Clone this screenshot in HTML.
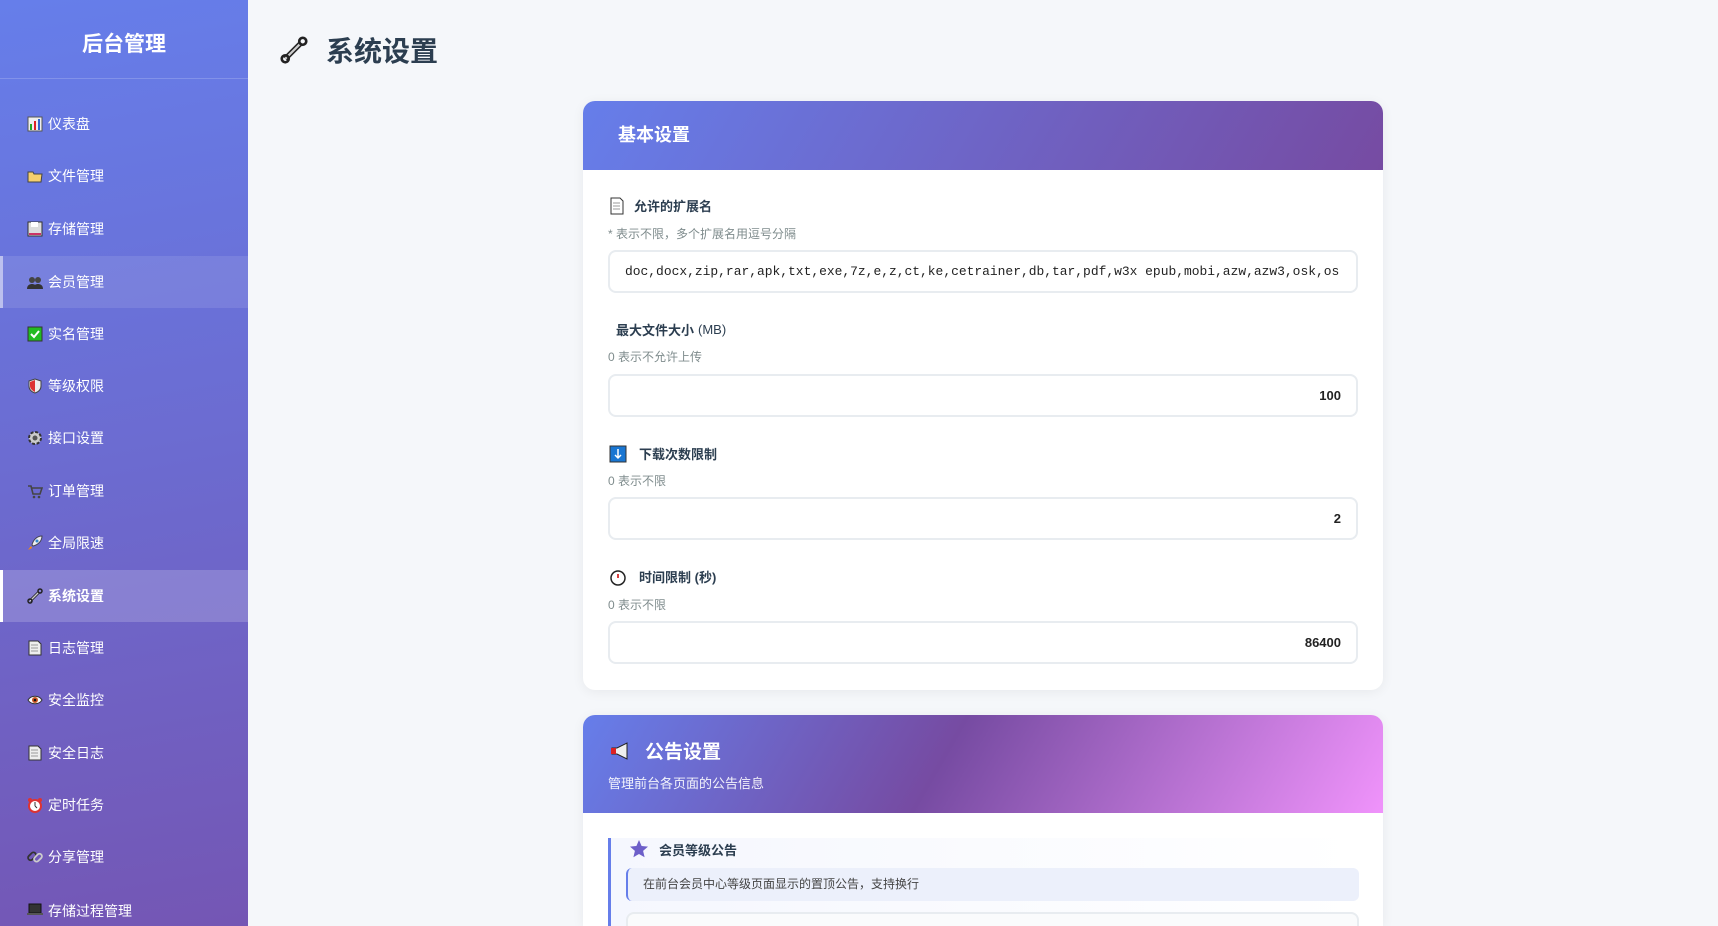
<!DOCTYPE html>
<html style="width:1718px;height:926px;overflow:hidden"><head><meta charset="utf-8"><style>
*{margin:0;padding:0;box-sizing:border-box}
body{width:1718px;height:926px;overflow:hidden;background:#f5f7fa;font-family:"Liberation Sans","Noto Sans CJK SC",sans-serif;position:relative}
.sb{position:absolute;left:0;top:0;width:248px;height:926px;overflow:hidden;background:linear-gradient(170deg,#667eea 0%,#6c6bd0 50%,#7456b4 100%)}
.sb h1{position:absolute;top:28px;left:0;width:248px;text-align:center;color:#fff;font-size:21px;font-weight:bold}
.sb .div{position:absolute;top:78px;left:0;width:248px;height:1px;background:rgba(255,255,255,.18)}
.mi{position:absolute;left:0;width:248px;height:52px;color:#fff;font-size:14px;display:flex;align-items:center;padding-left:27px}
.mi svg{width:16px;height:16px;margin-right:5px;flex:none}
.mi.h{background:rgba(255,255,255,.1);border-left:3px solid rgba(255,255,255,.5);padding-left:24px}
.mi.a{background:rgba(255,255,255,.18);border-left:3px solid #fff;padding-left:24px;font-weight:bold}
.title{position:absolute;left:280px;top:30px;display:flex;align-items:center;font-size:28px;font-weight:bold;color:#2c3e50}
.card{position:absolute;left:583px;width:800px;background:#fff;border-radius:12px;box-shadow:0 2px 12px rgba(0,0,0,.06);overflow:hidden}
.hd{background:linear-gradient(120deg,#667eea,#764ba2);color:#fff;padding:0 35px}
.lab{position:absolute;left:26px;font-size:13px;font-weight:bold;color:#2c3e50;display:flex;align-items:center}
.hint{position:absolute;left:25px;font-size:12px;color:#7f8c8d}
.inp{position:absolute;left:25px;width:750px;height:43px;border:2px solid #e8ecf0;border-radius:8px;display:flex;align-items:center;padding:0 15px;font-size:13px;font-weight:bold;color:#222;justify-content:flex-end}
</style></head><body>
<div class="sb">
<h1>后台管理</h1><div class="div"></div>
<div class="mi" style="top:98px"><svg viewBox="0 0 16 16"><rect x="1" y="1" width="14" height="14" fill="#eee" stroke="#555"/><rect x="3" y="8" width="2" height="6" fill="#2a2"/><rect x="7" y="5" width="2" height="9" fill="#d22"/><rect x="11" y="3" width="2" height="11" fill="#36c"/></svg>仪表盘</div>
<div class="mi" style="top:150px"><svg viewBox="0 0 16 16"><path d="M1 4h5l1 2h8l-1 8H1z" fill="#f5cf6e" stroke="#444"/></svg>文件管理</div>
<div class="mi" style="top:203px"><svg viewBox="0 0 16 16"><rect x="1" y="1" width="14" height="14" fill="#ddd" stroke="#333"/><rect x="4" y="1" width="7" height="5" fill="#fff"/><rect x="2" y="12" width="12" height="2" fill="#c36"/></svg>存储管理</div>
<div class="mi h" style="top:256px"><svg viewBox="0 0 16 16"><circle cx="5" cy="6" r="3" fill="#444"/><circle cx="11" cy="6" r="3" fill="#444"/><path d="M0 15c0-4 3-5 5-5s5 1 5 5zM6 15c0-4 3-5 5-5s5 1 5 5z" fill="#333"/></svg>会员管理</div>
<div class="mi" style="top:308px"><svg viewBox="0 0 16 16"><rect x="1" y="1" width="14" height="14" fill="#2b2" stroke="#333"/><path d="M4 8l3 3 5-6" stroke="#fff" stroke-width="2" fill="none"/></svg>实名管理</div>
<div class="mi" style="top:360px"><svg viewBox="0 0 16 16"><path d="M8 1l6 2v5c0 4-3 6-6 7-3-1-6-3-6-7V3z" fill="#eee" stroke="#444"/><path d="M8 2v12c-2-1-5-3-5-6V4z" fill="#d33"/></svg>等级权限</div>
<div class="mi" style="top:412px"><svg viewBox="0 0 16 16"><circle cx="8" cy="8" r="6" fill="#ccc" stroke="#333" stroke-width="2" stroke-dasharray="3 1.7"/><circle cx="8" cy="8" r="2.5" fill="#555"/></svg>接口设置</div>
<div class="mi" style="top:465px"><svg viewBox="0 0 16 16"><path d="M1 3h3l2 8h7l2-6H5" fill="none" stroke="#444" stroke-width="1.6"/><circle cx="7" cy="14" r="1.3" fill="#444"/><circle cx="12" cy="14" r="1.3" fill="#444"/></svg>订单管理</div>
<div class="mi" style="top:517px"><svg viewBox="0 0 16 16"><path d="M15 1c-5 0-9 4-10 9l1 1c5-1 9-5 9-10z" fill="#eee" stroke="#445"/><circle cx="10" cy="6" r="1.5" fill="#38c"/><path d="M4 11l-3 4 4-2z" fill="#f80"/></svg>全局限速</div>
<div class="mi a" style="top:570px"><svg viewBox="0 0 16 16"><path d="M3 13L12 4" stroke="#222" stroke-width="3"/><path d="M3 13L12 4" stroke="#ccc" stroke-width="1.3"/><circle cx="13" cy="3" r="2" fill="none" stroke="#222" stroke-width="1.5"/><circle cx="3" cy="13" r="2" fill="none" stroke="#222" stroke-width="1.5"/></svg>系统设置</div>
<div class="mi" style="top:622px"><svg viewBox="0 0 16 16"><path d="M2 1h9l3 3v11H2z" fill="#eee" stroke="#333"/><path d="M4 5h7M4 8h7M4 11h7" stroke="#999"/></svg>日志管理</div>
<div class="mi" style="top:674px"><svg viewBox="0 0 16 16"><path d="M1 8c3-5 11-5 14 0-3 5-11 5-14 0z" fill="#fff" stroke="#333"/><circle cx="8" cy="8" r="3" fill="#c52"/><circle cx="8" cy="8" r="1.3" fill="#111"/></svg>安全监控</div>
<div class="mi" style="top:727px"><svg viewBox="0 0 16 16"><path d="M2 1h9l3 3v11H2z" fill="#eee" stroke="#333"/><path d="M4 5h7M4 8h7M4 11h7" stroke="#999"/></svg>安全日志</div>
<div class="mi" style="top:779px"><svg viewBox="0 0 16 16"><circle cx="8" cy="9" r="6" fill="#fff" stroke="#d33" stroke-width="2"/><path d="M8 9V5M8 9l2 2" stroke="#333"/><circle cx="3" cy="3" r="2" fill="#d33"/><circle cx="13" cy="3" r="2" fill="#d33"/></svg>定时任务</div>
<div class="mi" style="top:831px"><svg viewBox="0 0 16 16"><rect x="1" y="5" width="9" height="5" rx="2.5" transform="rotate(-45 5 8)" fill="none" stroke="#333" stroke-width="1.8"/><rect x="6" y="6" width="9" height="5" rx="2.5" transform="rotate(-45 11 8)" fill="none" stroke="#ccc" stroke-width="1.8"/></svg>分享管理</div>
<div class="mi" style="top:883px;height:43px;align-items:flex-start;padding-top:18px"><svg viewBox="0 0 16 16"><rect x="2" y="3" width="12" height="9" fill="#333" stroke="#111"/><rect x="0" y="12" width="16" height="2" fill="#555"/></svg>存储过程管理</div>
</div>

<div class="title"><svg width="28" height="28" viewBox="0 0 16 16" style="margin-right:18px"><path d="M3 13L12 4" stroke="#222" stroke-width="3"/><path d="M3 13L12 4" stroke="#ccc" stroke-width="1.3"/><circle cx="13" cy="3" r="2" fill="none" stroke="#222" stroke-width="1.5"/><circle cx="3" cy="13" r="2" fill="none" stroke="#222" stroke-width="1.5"/></svg>系统设置</div>

<div class="card" style="top:101px;height:589px">
<div class="hd" style="height:69px;line-height:69px;font-size:18px;font-weight:bold">基本设置</div>
<div class="lab" style="top:95px"><svg width="16" height="18" viewBox="0 0 16 18" style="margin-right:9px"><path d="M2 1h9l3 3v13H2z" fill="#fff" stroke="#333"/><path d="M4 6h7M4 9h7M4 12h7" stroke="#999"/></svg>允许的扩展名</div>
<div class="hint" style="top:124px">* 表示不限，多个扩展名用逗号分隔</div>
<div class="inp" style="top:149px;justify-content:flex-start;font-family:'Liberation Mono',monospace;font-weight:normal;font-size:12.95px;white-space:nowrap;overflow:hidden">doc,docx,zip,rar,apk,txt,exe,7z,e,z,ct,ke,cetrainer,db,tar,pdf,w3x epub,mobi,azw,azw3,osk,os</div>
<div class="lab" style="top:219px;left:33px">最大文件大小 <span style="font-weight:normal;margin-left:4px">(MB)</span></div>
<div class="hint" style="top:247px">0 表示不允许上传</div>
<div class="inp" style="top:273px">100</div>
<div class="lab" style="top:343px"><svg width="18" height="18" viewBox="0 0 18 18" style="margin-right:12px"><rect x="1" y="1" width="16" height="16" fill="#1976d2" stroke="#333"/><path d="M9 4v9M6 10l3 3 3-3" stroke="#fff" stroke-width="1.5" fill="none"/></svg>下载次数限制</div>
<div class="hint" style="top:371px">0 表示不限</div>
<div class="inp" style="top:396px">2</div>
<div class="lab" style="top:466px"><svg width="18" height="18" viewBox="0 0 18 18" style="margin-right:12px"><circle cx="9" cy="10" r="7" fill="#fff" stroke="#222" stroke-width="1.5"/><path d="M9 10V6" stroke="#c00" stroke-width="1.5"/></svg>时间限制 (秒)</div>
<div class="hint" style="top:495px">0 表示不限</div>
<div class="inp" style="top:520px">86400</div>
</div>

<div class="card" style="top:715px;height:211px;border-radius:12px 12px 0 0">
<div class="hd" style="height:98px;background:linear-gradient(120deg,#667eea 0%,#764ba2 45%,#f093fb 100%);padding-left:26px;position:relative">
<div style="position:absolute;top:22px;left:26px;display:flex;align-items:center;font-size:19px;font-weight:bold"><svg width="22" height="18" viewBox="0 0 22 18" style="margin-right:14px"><path d="M3 6h5l10-5v16L8 12H3z" fill="#eee" stroke="#222"/><rect x="2" y="6" width="5" height="6" fill="#d22"/></svg>公告设置</div>
<div style="position:absolute;top:58px;left:25px;font-size:13px;font-weight:normal;color:rgba(255,255,255,.92)">管理前台各页面的公告信息</div>
</div>
<div style="position:absolute;left:25px;top:123px;width:750px;height:100px;border-left:3px solid #667eea;background:linear-gradient(90deg,#f5f7fe,#fff)">
<div style="position:absolute;left:18px;top:1px;display:flex;align-items:center;font-size:13px;font-weight:bold;color:#2c3e50"><svg width="20" height="20" viewBox="0 0 20 20" style="margin-right:10px"><path d="M10 1l2.6 6 6.4.6-4.9 4.3 1.5 6.3L10 15l-5.6 3.2 1.5-6.3L1 7.6l6.4-.6z" fill="#6d5fc9"/></svg>会员等级公告</div>
<div style="position:absolute;left:15px;top:30px;width:733px;height:33px;background:#ecf0fb;border-left:2px solid #667eea;border-radius:6px;font-size:12px;color:#444;padding-left:15px;line-height:33px">在前台会员中心等级页面显示的置顶公告，支持换行</div>
<div style="position:absolute;left:15px;top:74px;width:733px;height:40px;border:2px solid #e8ecf0;border-radius:8px;background:#fafbfc"></div>
</div>
</div>
</body></html>
